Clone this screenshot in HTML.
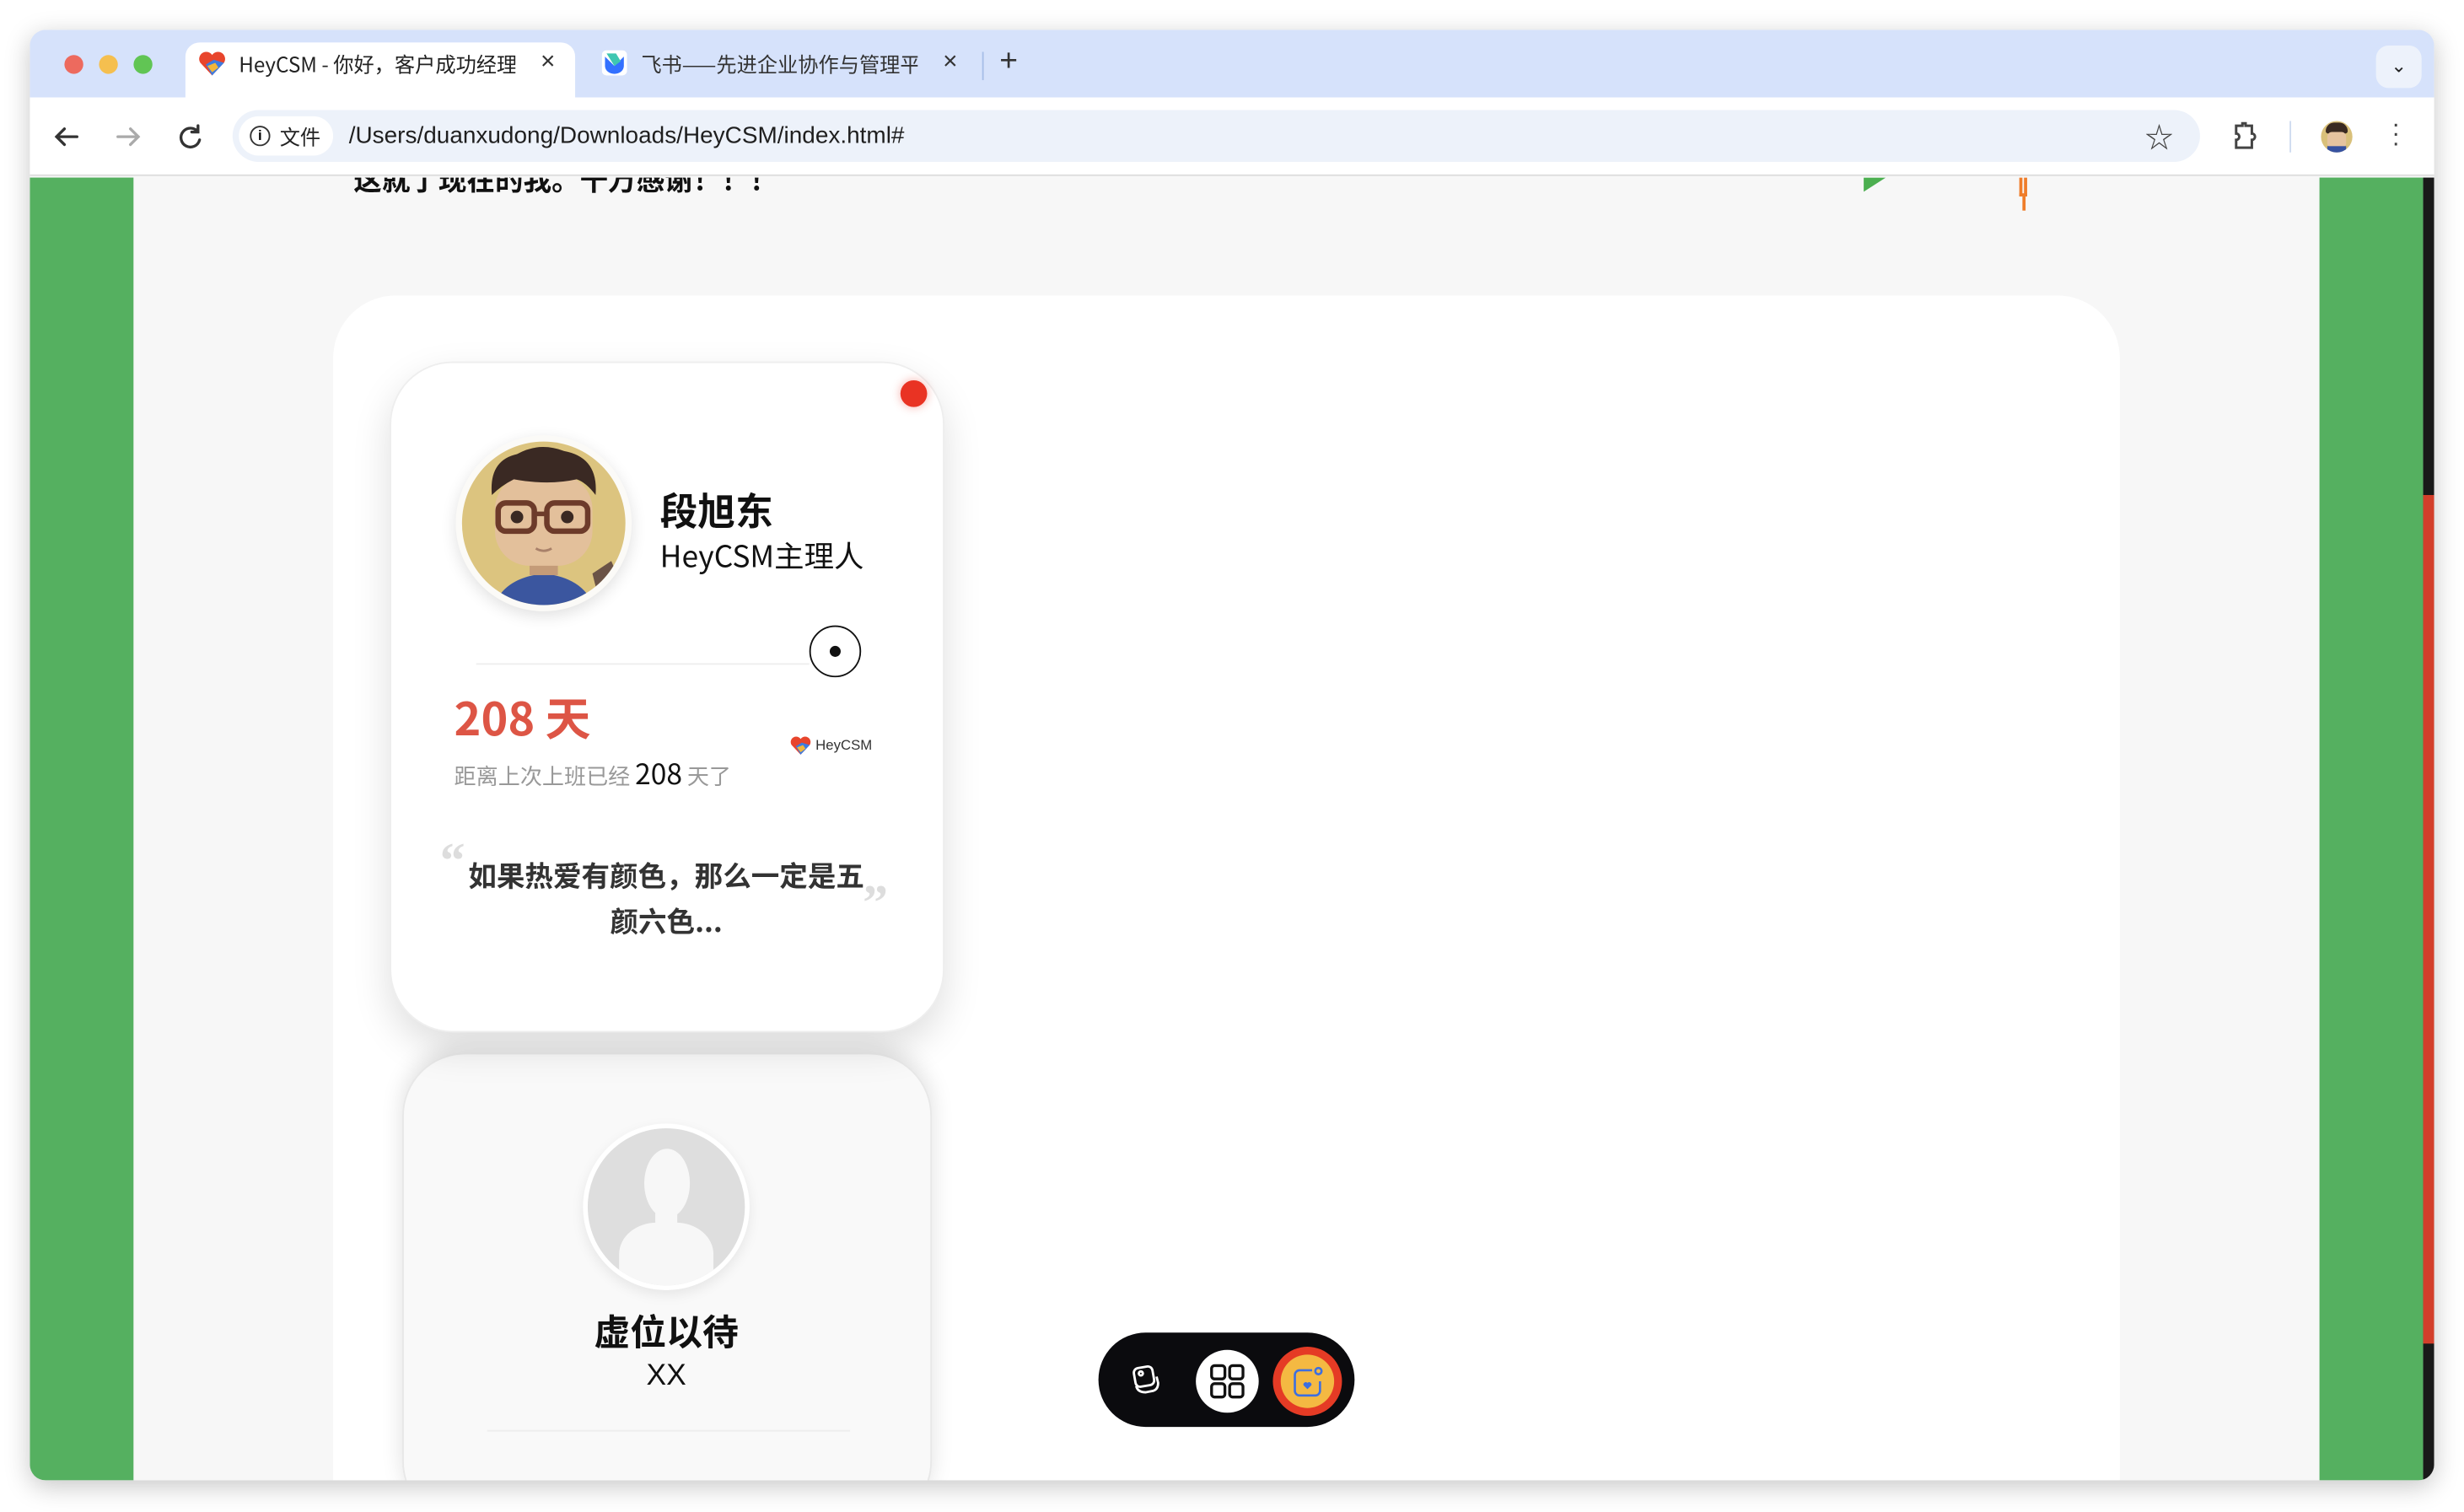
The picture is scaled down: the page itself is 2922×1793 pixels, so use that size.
<!DOCTYPE html>
<html><head><meta charset="utf-8"><style>
*{margin:0;padding:0;box-sizing:border-box}
html,body{width:2922px;height:1792px;overflow:hidden;background:#fff}
#w{position:absolute;left:0;top:0;width:1568px;height:962px;transform:scale(1.86352);transform-origin:0 0;font-family:"Liberation Sans","Noto Sans CJK SC",sans-serif}
.a{position:absolute}
.win{left:19px;top:19px;width:1530px;height:923px;border-radius:10px;overflow:hidden;box-shadow:0 4px 16px rgba(0,0,0,.22);background:#f7f7f7}
.cj{font-family:"Noto Sans CJK SC","Liberation Sans",sans-serif}
</style></head><body><div id="w">
<div class="a win">
 <div class="a" style="left:0;top:0;width:1530px;height:43px;background:#d6e2fb"></div>
 <div class="a" style="left:22px;top:16px;width:12px;height:12px;border-radius:50%;background:#ed6a5e"></div>
 <div class="a" style="left:44px;top:16px;width:12px;height:12px;border-radius:50%;background:#f5bf4f"></div>
 <div class="a" style="left:66px;top:16px;width:12px;height:12px;border-radius:50%;background:#61c554"></div>
 <div class="a" style="left:99px;top:8px;width:248px;height:36px;background:#fff;border-radius:9px 9px 0 0"></div>
 <svg class="a" style="left:107px;top:13px" width="18" height="17" viewBox="0 0 18 17"><path d="M9 16L1.5 8A4.3 4.3 0 0 1 9 3A4.3 4.3 0 0 1 16.5 8Z" fill="#e8452c"/><path d="M9 16L5 9L10 6L16.5 8Z" fill="#3d7be0"/><path d="M6 10l5-2 2 3-4 3z" fill="#f2b63a"/></svg>
 <div class="a cj" style="left:133px;top:12px;font-size:13px;color:#222;white-space:nowrap;width:176px;overflow:hidden">HeyCSM - 你好，客户成功经理</div>
 <div class="a" style="left:325px;top:12px;font-size:16px;color:#333">×</div>
 <svg class="a" style="left:364px;top:13px" width="16" height="16" viewBox="0 0 16 16"><rect width="16" height="16" rx="3" fill="#fff"/><path d="M2 4l6 6 6-6v6a6 5 0 0 1-12 0z" fill="#3370ff"/><path d="M3 2h6l3 5-4 3z" fill="#3ec6b1"/></svg>
 <div class="a cj" style="left:389px;top:12px;font-size:13px;color:#333;white-space:nowrap;width:176px;overflow:hidden">飞书——先进企业协作与管理平台</div>
 <div class="a" style="left:581px;top:12px;font-size:16px;color:#333">×</div>
 <div class="a" style="left:606px;top:14px;width:1px;height:18px;background:#a8bfe8"></div>
 <div class="a" style="left:617px;top:9px;font-size:20px;color:#333">+</div>
 <div class="a" style="left:1493px;top:10px;width:29px;height:27px;border-radius:8px;background:#edf2fb;font-size:12px;text-align:center;line-height:27px;color:#222">⌄</div>
 <div class="a" style="left:0;top:43px;width:1530px;height:50px;background:#fff;border-bottom:1px solid #ddd"></div>
 <svg class="a" style="left:14px;top:59px" width="130" height="18" viewBox="0 0 130 18" fill="none" stroke-width="1.8" stroke-linecap="round"><path d="M16 9H3M8 4L3 9l5 5" stroke="#333"/><path d="M42 9h13M50 4l5 5-5 5" stroke="#aaa"/><path d="M93 6a6 6 0 1 0 1 5M93 2v4h-4" stroke="#333"/></svg>
 <div class="a" style="left:129px;top:51px;width:1252px;height:33px;border-radius:17px;background:#edf2fa"></div>
 <div class="a" style="left:133px;top:55px;width:60px;height:25px;border-radius:13px;background:#fff"></div>
 <div class="a" style="left:140px;top:61px;width:13px;height:13px;border:1.4px solid #333;border-radius:50%;font-size:9px;line-height:11px;text-align:center;font-weight:bold">i</div>
 <div class="a cj" style="left:159px;top:58px;font-size:13px;color:#222">文件</div>
 <div class="a" style="left:203px;top:59px;font-size:15px;color:#1f1f1f">/Users/duanxudong/Downloads/HeyCSM/index.html#</div>
 <div class="a" style="left:1346px;top:55px;font-size:18px;color:#444">☆</div>
 <svg class="a" style="left:1401px;top:58px" width="18" height="19" viewBox="0 0 18 19" fill="none" stroke="#444" stroke-width="1.6"><path d="M3 3h4V1.5h2V3h4v5a2 2 0 0 1 0 4v5H3v-5a2 2 0 0 0 0-4z"/></svg>
 <div class="a" style="left:1438px;top:58px;width:1px;height:20px;background:#cfdbf0"></div>
 <div class="a" style="left:1458px;top:58px;width:20px;height:20px;border-radius:50%;background:#d9c07a;overflow:hidden"><div class="a" style="left:3px;top:1px;width:14px;height:7px;background:#3a2a22;border-radius:7px 7px 2px 2px"></div><div class="a" style="left:4px;top:7px;width:12px;height:10px;background:#e5c39f;border-radius:3px"></div><div class="a" style="left:4px;top:16px;width:12px;height:5px;background:#3651a0"></div></div>
 <div class="a" style="left:1503px;top:58px;font-size:16px;color:#444;line-height:6px;width:6px">·<br>·<br>·</div>

 <div class="a" style="left:0;top:94px;width:66px;height:829px;background:#55b060"></div>
 <div class="a" style="left:1457px;top:94px;width:66px;height:829px;background:#55b060"></div>
 <div class="a" style="left:1523px;top:94px;width:7px;height:829px;background:#191919"></div>
 <div class="a" style="left:1523px;top:296px;width:7px;height:540px;background:#d33f2b"></div>
 <div class="a" style="left:66px;top:94px;width:1391px;height:829px;background:#f7f7f7;overflow:hidden">
  <div class="a cj" style="left:140px;top:-12px;font-size:18px;font-weight:bold;color:#111">这就了现在的我。千万感谢！！！</div>
  <div class="a" style="left:1101px;top:0;width:0;height:0;border-left:14px solid #4caf50;border-bottom:9px solid transparent"></div>
  <div class="a" style="left:1200px;top:0;width:5px;height:12px;border:2px solid #ef7d2a;border-top:0"></div>
  <div class="a" style="left:1202px;top:12px;width:2px;height:9px;background:#ef7d2a"></div>
  <div class="a" style="left:127px;top:75px;width:1137px;height:800px;border-radius:40px;background:#fff"></div>
 </div>
 <!-- card 2 -->
 <div class="a" style="left:237px;top:651px;width:337px;height:300px;border-radius:40px;background:#f9f9f9;border:1px solid #e8e8e8;box-shadow:0 -4px 14px rgba(0,0,0,.12)"></div>
 <div class="a" style="left:352px;top:696px;width:106px;height:106px;border-radius:50%;background:#fff;box-shadow:0 3px 8px rgba(0,0,0,.08)"></div>
 <div class="a" style="left:355px;top:699px;width:100px;height:100px;border-radius:50%;background:#dedede;overflow:hidden"><div class="a" style="left:36px;top:13px;width:29px;height:44px;border-radius:50%;background:#f7f7f7"></div><div class="a" style="left:20px;top:60px;width:60px;height:50px;border-radius:40% 40% 0 0;background:#f7f7f7"></div><div class="a" style="left:43px;top:48px;width:14px;height:16px;background:#f7f7f7"></div></div>
 <div class="a cj" style="left:305px;top:810px;width:200px;text-align:center;font-size:23px;font-weight:bold;color:#111">虚位以待</div>
 <div class="a" style="left:305px;top:846px;width:200px;text-align:center;font-size:19px;color:#111">XX</div>
 <div class="a" style="left:291px;top:891px;width:231px;height:1px;background:#eee"></div>
 <!-- card 1 -->
 <div class="a" style="left:229px;top:211px;width:353px;height:427px;border-radius:40px;background:#fff;border:1px solid #eee;box-shadow:0 10px 24px rgba(0,0,0,.13)"></div>
 <div class="a" style="left:554px;top:223px;width:17px;height:17px;border-radius:50%;background:#e93323;box-shadow:0 0 6px rgba(233,51,35,.4)"></div>
 <div class="a" style="left:271px;top:258px;width:112px;height:112px;border-radius:50%;background:#fbfaf7;box-shadow:0 3px 10px rgba(0,0,0,.12)"></div>
 <svg class="a" style="left:274px;top:261px" width="106" height="106" viewBox="0 0 106 106"><clipPath id="c"><circle cx="53" cy="53" r="52"/></clipPath><g clip-path="url(#c)"><rect width="106" height="106" fill="#dcc47f"/><path d="M20 110q5-22 33-25q28 3 33 25z" fill="#3b569f"/><rect x="44" y="70" width="18" height="16" fill="#c49b78"/><rect x="22" y="22" width="62" height="58" rx="22" fill="#e3c09b"/><path d="M20 35q-2-22 16-26q14-8 30-2q22 4 20 28q-6-8-12-10q-18 4-40 0q-8 4-14 10z" fill="#3a2923"/><rect x="24" y="40" width="23" height="18" rx="5" fill="none" stroke="#6d3b2a" stroke-width="3.5"/><rect x="55" y="40" width="26" height="18" rx="5" fill="none" stroke="#6d3b2a" stroke-width="3.5"/><path d="M47 47h8" stroke="#6d3b2a" stroke-width="3"/><circle cx="36" cy="49" r="4" fill="#3a2923"/><circle cx="68" cy="49" r="4" fill="#3a2923"/><path d="M48 69q5 3 10 0" stroke="#a9816a" stroke-width="1.5" fill="none"/><path d="M84 85l12-8 6 14-14 10z" fill="#6b5346"/></g></svg>
 <div class="a cj" style="left:401px;top:287px;font-size:24px;font-weight:bold;color:#111">段旭东</div>
 <div class="a cj" style="left:401px;top:321px;font-size:19px;color:#111">HeyCSM主理人</div>
 <div class="a" style="left:284px;top:403px;width:212px;height:1px;background:#eee"></div>
 <div class="a" style="left:496px;top:379px;width:33px;height:33px;border-radius:50%;border:1.5px solid #111;background:#fff"></div>
 <div class="a" style="left:509px;top:392px;width:7px;height:7px;border-radius:50%;background:#111"></div>
 <div class="a cj" style="left:270px;top:416px;font-size:29px;font-weight:bold;color:#dd5545">208 天</div>
 <div class="a cj" style="left:270px;top:460px;font-size:14px;color:#999;white-space:nowrap">距离上次上班已经 <span style="font-size:18px;color:#111">208</span> 天了</div>
 <svg class="a" style="left:483px;top:449px" width="15" height="13" viewBox="0 0 18 17"><path d="M9 16L1.5 8A4.3 4.3 0 0 1 9 3A4.3 4.3 0 0 1 16.5 8Z" fill="#e8452c"/><path d="M9 16L5 9L10 6L16.5 8Z" fill="#3d7be0"/><path d="M6 10l5-2 2 3-4 3z" fill="#f2b63a"/></svg>
 <div class="a" style="left:500px;top:450px;font-size:9px;color:#333">HeyCSM</div>
 <div class="a" style="left:261px;top:510px;font-size:32px;color:#ddd;font-family:'Liberation Serif',serif;font-weight:bold">“</div>
 <div class="a" style="left:530px;top:537px;font-size:32px;color:#ddd;font-family:'Liberation Serif',serif;font-weight:bold">”</div>
 <div class="a cj" style="left:277px;top:524px;width:256px;text-align:center;font-size:18px;line-height:29px;font-weight:bold;color:#333">如果热爱有颜色，那么一定是五颜六色...</div>
 <!-- toolbar -->
 <div class="a" style="left:680px;top:829px;width:163px;height:60px;border-radius:30px;background:#0b0b0e"></div>
 <svg class="a" style="left:700px;top:849px" width="20" height="20" viewBox="0 0 20 20" fill="none" stroke="#fff" stroke-width="1.5"><rect x="3" y="2" width="12" height="12" rx="3" transform="rotate(-10 9 8)"/><path d="M4 14q1 4 6 4l5-1q3-1 3-5l-1-4"/><circle cx="7" cy="6" r="1.3"/></svg>
 <div class="a" style="left:742px;top:840px;width:40px;height:40px;border-radius:50%;background:#fff"></div>
 <svg class="a" style="left:751px;top:849px" width="22" height="22" viewBox="0 0 22 22" fill="none" stroke="#111" stroke-width="1.8"><rect x="1" y="1" width="8.5" height="8.5" rx="2"/><rect x="12.5" y="1" width="8.5" height="8.5" rx="2"/><rect x="1" y="12.5" width="8.5" height="8.5" rx="2"/><rect x="12.5" y="12.5" width="8.5" height="8.5" rx="2"/></svg>
 <div class="a" style="left:791px;top:838px;width:44px;height:44px;border-radius:50%;background:#e53b25"></div>
 <div class="a" style="left:796px;top:843px;width:34px;height:34px;border-radius:50%;background:#f4b942"></div>
 <svg class="a" style="left:803px;top:850px" width="21" height="21" viewBox="0 0 21 21" fill="none" stroke="#3d6fe0" stroke-width="1.4"><path d="M13 3H5a3 3 0 0 0-3 3v10a3 3 0 0 0 3 3h10a3 3 0 0 0 3-3v-6"/><circle cx="17" cy="3.5" r="2"/><path d="M10 15l-2.5-2.5a1.5 1.5 0 0 1 2.5-1.5a1.5 1.5 0 0 1 2.5 1.5z" fill="#3d6fe0" stroke="none"/></svg>
</div>
</div></body></html>
